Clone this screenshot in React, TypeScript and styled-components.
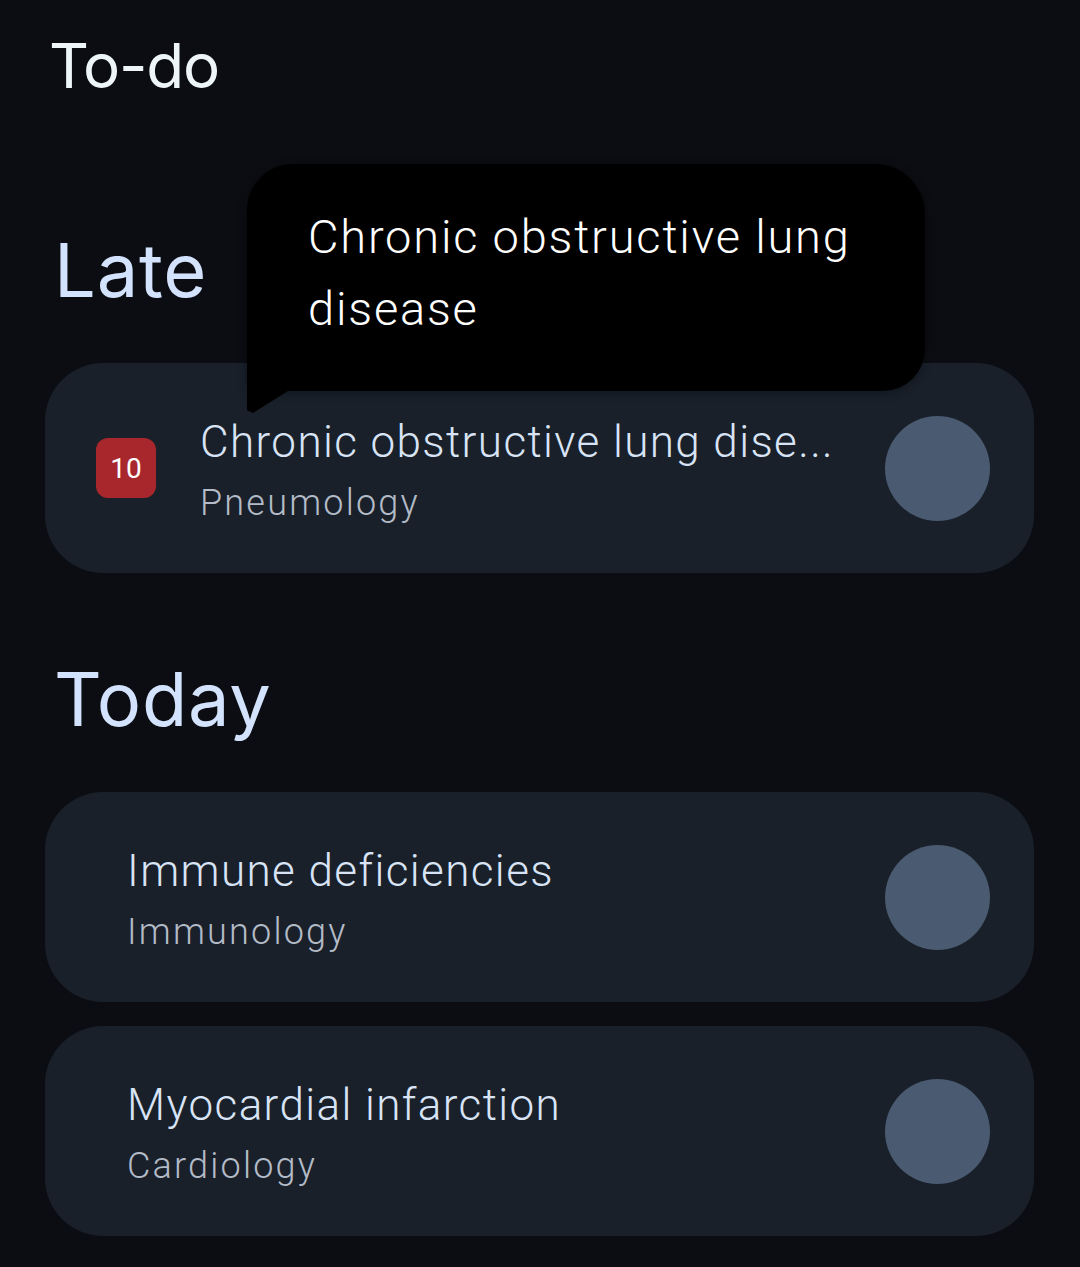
import React from "react";
import styled, { createGlobalStyle } from "styled-components";

const GlobalStyle = createGlobalStyle`
  html, body {
    margin: 0;
    padding: 0;
    background: #0b0d12;
  }
  body {
    font-family: Roboto, "Noto Sans", sans-serif;
    -webkit-font-smoothing: antialiased;
  }
`;

const Page = styled.div`
  position: relative;
  width: 1080px;
  min-height: 1267px;
  box-sizing: border-box;
  padding: 35px 46px 0 45px;
  background: #0b0d12;
`;

const ScreenTitle = styled.h1`
  margin: 0 0 0 4px;
  font-family: Inter, Roboto, sans-serif;
  font-weight: 400;
  font-size: 62px;
  line-height: 62px;
  letter-spacing: -1.2px;
  color: #eef5f7;
`;

const Section = styled.section<{ $top: number }>`
  display: flex;
  flex-direction: column;
  gap: 24px;
  margin-top: ${(p) => p.$top}px;
`;

const SectionTitle = styled.h2`
  margin: 0 0 32px 9px;
  font-family: Inter, Roboto, sans-serif;
  font-weight: 400;
  font-size: 74px;
  line-height: 74px;
  letter-spacing: 0.8px;
  color: #d3e3fd;
`;

const Card = styled.div<{ $hasBadge: boolean }>`
  display: flex;
  align-items: center;
  height: 210px;
  box-sizing: border-box;
  padding: 0 44px 0 ${(p) => (p.$hasBadge ? 51 : 82)}px;
  border-radius: 58px;
  background: #19202a;
  gap: 44px;
`;

const Badge = styled.div`
  flex: none;
  display: flex;
  align-items: center;
  justify-content: center;
  width: 60px;
  height: 60px;
  border-radius: 12px;
  background: #a8272d;
  color: #ffffff;
  font-family: Roboto, sans-serif;
  font-size: 28px;
  font-weight: 400;
`;

const TextBlock = styled.div`
  flex: 1;
  min-width: 0;
  display: flex;
  flex-direction: column;
  padding-top: 5px;
`;

const ItemTitle = styled.div`
  font-family: Roboto, sans-serif;
  font-weight: 300;
  font-size: 44px;
  line-height: 56px;
  letter-spacing: 1.4px;
  color: #d8e4f6;
  white-space: nowrap;
`;

const ItemSubtitle = styled.div`
  margin-top: 9px;
  font-family: Roboto, sans-serif;
  font-weight: 300;
  font-size: 36px;
  line-height: 48px;
  letter-spacing: 2.2px;
  color: #b3bbc7;
`;

const Check = styled.div`
  flex: none;
  width: 105px;
  height: 105px;
  border-radius: 50%;
  background: #4a5a70;
`;

const Tooltip = styled.div`
  position: absolute;
  left: 247px;
  top: 164px;
  width: 678px;
  box-sizing: border-box;
  padding: 37px 30px 46px 61px;
  background: #000000;
  border-radius: 46px 50px 42px 0;
  font-family: Roboto, sans-serif;
  font-weight: 300;
  font-size: 47px;
  line-height: 72px;
  letter-spacing: 1.8px;
  color: #ffffff;
  box-shadow: 0 2px 10px rgba(0, 0, 0, 0.35);

  &::after {
    content: "";
    position: absolute;
    left: 0;
    top: 100%;
    width: 41px;
    height: 22px;
    background: #000000;
    clip-path: polygon(0 0, 100% 0, 6px 100%, 0 88%);
  }
`;

type Item = { title: string; label: string; subtitle: string; badge?: string };

const late: Item[] = [
  {
    title: "Chronic obstructive lung disease",
    label: "Chronic obstructive lung dise...",
    subtitle: "Pneumology",
    badge: "10",
  },
];

const today: Item[] = [
  { title: "Immune deficiencies", label: "Immune deficiencies", subtitle: "Immunology" },
  { title: "Myocardial infarction", label: "Myocardial infarction", subtitle: "Cardiology" },
];

function TaskCard({ item }: { item: Item }) {
  return (
    <Card $hasBadge={!!item.badge}>
      {item.badge && <Badge>{item.badge}</Badge>}
      <TextBlock>
        <ItemTitle title={item.title}>{item.label}</ItemTitle>
        <ItemSubtitle>{item.subtitle}</ItemSubtitle>
      </TextBlock>
      <Check />
    </Card>
  );
}

export default function App() {
  return (
    <>
      <GlobalStyle />
      <Page>
        <ScreenTitle>To-do</ScreenTitle>
        <Section $top={136}>
          <SectionTitle>Late</SectionTitle>
          {late.map((it) => (
            <TaskCard key={it.title} item={it} />
          ))}
        </Section>
        <Section $top={89}>
          <SectionTitle>Today</SectionTitle>
          {today.map((it) => (
            <TaskCard key={it.title} item={it} />
          ))}
        </Section>
        <Tooltip>{late[0].title}</Tooltip>
      </Page>
    </>
  );
}
